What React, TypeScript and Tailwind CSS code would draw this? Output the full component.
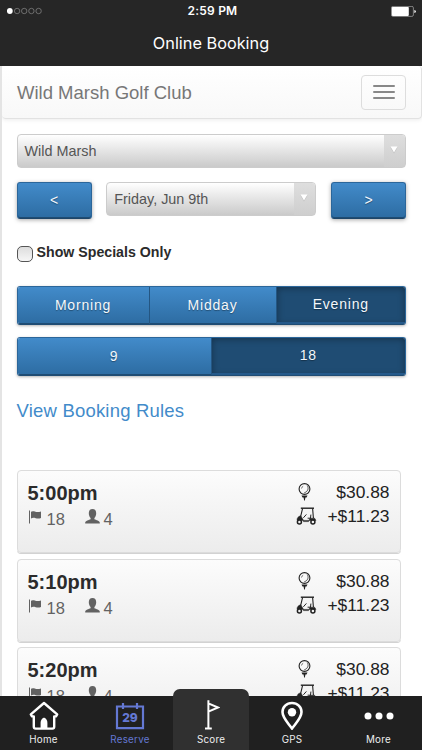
import type { ReactNode } from "react";

const helvetica = "font-['Liberation_Sans',Arial,sans-serif]";
const inter = "font-['Inter',sans-serif]";

function StatusBar() {
  return (
    <div className={`flex h-[22px] items-center justify-between pl-[7px] pr-[6px] text-white ${inter}`}>
      <span className="w-[70px]">
        <svg width="36" height="8" viewBox="0 0 36 8">
          <circle cx="2.8" cy="4" r="2.9" fill="#fff" />
          {[10.1, 17.2, 24.4, 31.6].map((x) => (
            <circle key={x} cx={x} cy="4" r="2.7" fill="none" stroke="#8a8a8a" strokeWidth="0.7" />
          ))}
        </svg>
      </span>
      <span className="pl-[2px] text-[12px] font-semibold tracking-[0.2px]">2:59 PM</span>
      <span className="flex w-[70px] justify-end">
        <svg width="25" height="11" viewBox="0 0 25 11">
          <rect x="0.4" y="0.4" width="22" height="10" rx="1.5" fill="none" stroke="#aaa" strokeWidth="0.7" />
          <rect x="0.8" y="0.9" width="17" height="9" rx="0.8" fill="#fff" />
          <path d="M23.4 4 Q24.9 4.3 24.9 5.5 T23.4 7Z" fill="#fff" />
        </svg>
      </span>
    </div>
  );
}

function Select({ label, className }: { label: string; className: string }) {
  return (
    <div
      className={`flex h-[34px] overflow-hidden rounded-[4px] border border-[#ccc] bg-gradient-to-b from-white to-[#cacaca] ${className}`}
    >
      <span className="flex-1 pl-[7px] text-[14.4px] leading-[33px] text-[#555]">{label}</span>
      <span className="flex w-[21px] justify-center bg-gradient-to-b from-[#dedede] to-[#cecece] pt-[11px]">
        <svg width="8" height="8" viewBox="0 0 8 8" className="-ml-[1px]">
          <path d="M0.5 1.5H7.5L4 7.5Z" fill="#999" opacity="0.4" />
          <path d="M0.5 0.5H7.5L4 6.5Z" fill="#fff" />
        </svg>
      </span>
    </div>
  );
}

const blueFace =
  "bg-gradient-to-b from-[#428bca] to-[#2d6ca2] text-[#f4f8fc] [text-shadow:0_1px_1px_rgba(0,0,0,0.35)] text-center text-[14px]";
const activeFace =
  "bg-[#1f4c73] text-[#f4f8fc] text-center text-[14px] [text-shadow:0_1px_1px_rgba(0,0,0,0.35)] shadow-[inset_0_-2px_0_#24598a,inset_0_1px_7px_rgba(0,0,0,0.35)]";

function ArrowButton({ children }: { children: ReactNode }) {
  return (
    <button
      className={`h-[37px] w-[75px] rounded-[3px] border border-[#2b669a] border-b-[#1d4568] shadow-[0_1px_4px_rgba(0,0,0,0.35),inset_0_-1px_0_#1f4c73] ${blueFace}`}
    >
      {children}
    </button>
  );
}

function Segments({ items }: { items: { label: string; width: string; active?: boolean }[] }) {
  return (
    <div className="flex h-[39px] overflow-hidden rounded-[3px] border border-[#2b669a] border-b-[#1f4c73] shadow-[0_1px_3px_rgba(0,0,0,0.3)]">
      {items.map((s, i) => (
        <div
          key={s.label}
          className={`tracking-[0.8px] ${s.width} ${
            s.active
              ? `${activeFace} leading-[35px]`
              : `${blueFace} leading-[37px] shadow-[inset_0_-1px_0_#1f4c73] ${i < items.length - 1 ? "border-r border-[#245682]" : ""}`
          }`}
        >
          {s.label}
        </div>
      ))}
    </div>
  );
}

function FlagIcon() {
  return (
    <svg width="14" height="14" viewBox="0 0 14 14" fill="#626262">
      <path d="M1 0.5H2V13.5H1Z" />
      <path d="M3 1.8C5.5 0 7.5 3.2 13 1.4V8C8.5 9.8 6.5 6.4 3 8.4Z" />
    </svg>
  );
}

function PersonIcon() {
  return (
    <svg width="15" height="15" viewBox="0 0 15 15" fill="#626262">
      <path d="M7.5 0C9.9 0 11.2 1.6 11.2 4.2C11.2 6.3 10.4 8 9.4 9V10.2C11 11 14.8 11.6 14.8 13.8V14.6H0.2V13.8C0.2 11.6 4 11 5.6 10.2V9C4.6 8 3.8 6.3 3.8 4.2C3.8 1.6 5.1 0 7.5 0Z" />
    </svg>
  );
}

function BallIcon() {
  return (
    <svg width="13" height="18" viewBox="0 0 13 18" fill="none" stroke="#222">
      <circle cx="6.5" cy="6" r="5.4" strokeWidth="1.1" />
      <path d="M9.2 2.5C11 5 10 8.6 6.3 9.8" strokeWidth="0.8" />
      <path d="M3.5 5.5Q3.8 3.8 5.2 3.2" strokeWidth="0.6" />
      <path d="M3.5 12.4H9.5L8.5 14.4H7.4L6.9 17.5H6.1L5.6 14.4H4.5Z" fill="#222" stroke="none" />
    </svg>
  );
}

function CartIcon() {
  return (
    <svg width="21" height="18" viewBox="0 0 21 18" fill="none" stroke="#222">
      <path d="M4.8 1.2H18" strokeWidth="1.4" />
      <path d="M6.6 1.4L4.6 9.6M16.6 1.4L17.4 11" strokeWidth="1.1" />
      <path d="M4.8 8.8L7.4 13.2V14.6H12.6L14 11.2H18.6L20 13.4H6L1 13.2C1 10.8 2.4 9.2 4.8 8.8Z" fill="#222" strokeWidth="0.5" />
      <path d="M7.4 10.8L10.4 7.4M11.6 11.2H14.5L14.9 7.6" strokeWidth="1" />
      <circle cx="3.4" cy="15.1" r="2" strokeWidth="1.5" fill="#f3f3f3" />
      <circle cx="16.9" cy="15.1" r="2" strokeWidth="1.5" fill="#f3f3f3" />
    </svg>
  );
}

function TeeTime({ time }: { time: string }) {
  return (
    <div className="flex h-[83px] w-[384px] shrink-0 justify-between rounded-[4px] border border-[#dcdcdc] bg-gradient-to-b from-[#fcfcfc] to-[#ececec] pl-[10px] pr-[10px] shadow-[0_1px_0_#d2d2d2]">
      <div className="pt-[10px]">
        <div className="text-[20px] font-bold leading-[24px] text-[#2b2b2b]">{time}</div>
        <div className="mt-[3px] flex h-[22px] text-[16.5px] leading-[23px] text-[#626262]">
          <span className="pt-[2px]"><FlagIcon /></span>
          <span className="ml-[5px] w-[38px]">18</span>
          <span className="pt-[1px]"><PersonIcon /></span>
          <span className="ml-[4px]">4</span>
        </div>
      </div>
      <div className="pt-[9px] text-[17.4px] leading-[24px] text-[#222]">
        <div className="flex items-start justify-between">
          <span className="pl-[2px] pt-[3px]"><BallIcon /></span>
          <span>$30.88</span>
        </div>
        <div className="flex items-start gap-[10px]">
          <span className="pt-[3px]"><CartIcon /></span>
          <span>+$11.23</span>
        </div>
      </div>
    </div>
  );
}

function Tab({ label, icon, className }: { label: string; icon: ReactNode; className: string }) {
  return (
    <div className={`flex flex-col items-center justify-end pb-[3.5px] ${className}`}>
      {icon}
      <span className="mt-[3px] text-[9.8px] leading-[14px] tracking-[0.25px]">{label}</span>
    </div>
  );
}

export default function App() {
  return (
    <div className={`flex h-[750px] w-[422px] flex-col overflow-hidden bg-white ${helvetica}`}>
      <header className="h-[66px] shrink-0 bg-[#262626]">
        <StatusBar />
        <h1 className={`text-center text-[16.3px] leading-[42px] text-white ${inter}`}>Online Booking</h1>
      </header>

      <main className="min-h-0 flex-1 overflow-hidden border-l-2 border-[#e4e4e4]">
        <nav className="flex h-[53px] items-center justify-between rounded-[4px] border-b border-r border-[#e2e2e2] bg-gradient-to-b from-white to-[#f8f8f8] pl-[15px] pr-[15px] shadow-[0_1px_4px_rgba(0,0,0,0.08)]">
          <span className="pt-[2px] text-[18.5px] text-[#777]">Wild Marsh Golf Club</span>
          <button className="flex h-[35px] w-[45px] flex-col items-center justify-center gap-[4px] rounded-[4px] border border-[#ddd]">
            <i className="h-[2px] w-[22px] rounded-[1px] bg-[#888]" />
            <i className="h-[2px] w-[22px] rounded-[1px] bg-[#888]" />
            <i className="h-[2px] w-[22px] rounded-[1px] bg-[#888]" />
          </button>
        </nav>

        <div className="flex flex-col pl-[14.5px] pr-[16px] pt-[15px]">
          <Select label="Wild Marsh" className="w-full" />
          <div className="mt-[14px] flex justify-between">
            <ArrowButton>&lt;</ArrowButton>
            <Select label="Friday, Jun 9th" className="w-[210px]" />
            <ArrowButton>&gt;</ArrowButton>
          </div>
          <label className="mt-[24px] flex h-[20px] items-center gap-[4px] text-[14.2px] font-bold text-[#2b2b2b]">
            <span className="mt-[2px] h-[16px] w-[16px] rounded-[5px] border border-[#555] bg-gradient-to-b from-[#ddd] to-[#f6f6f6]" />
            Show Specials Only
          </label>
          <div className="mt-[23px] flex flex-col gap-[12px]">
            <Segments
              items={[
                { label: "Morning", width: "w-[132px]" },
                { label: "Midday", width: "w-[127px]" },
                { label: "Evening", width: "flex-1", active: true },
              ]}
            />
            <Segments
              items={[
                { label: "9", width: "w-[194px]" },
                { label: "18", width: "flex-1", active: true },
              ]}
            />
          </div>
          <a className="mt-[23px] text-[18.5px] leading-[24px] tracking-[0.2px] text-[#428bca]">View Booking Rules</a>
          <div className="mt-[47px] flex flex-col gap-[5.5px]">
            <TeeTime time="5:00pm" />
            <TeeTime time="5:10pm" />
            <TeeTime time="5:20pm" />
          </div>
        </div>
      </main>

      <footer className={`relative flex h-[54px] shrink-0 bg-[#202020] text-[#eee] ${inter}`}>
        <Tab
          label="Home"
          className="w-[87px]"
          icon={
            <svg width="30" height="29" viewBox="0 0 30 29" fill="none" stroke="#fff" strokeWidth="2.4" strokeLinejoin="round">
              <path d="M15 2L1.8 13.4L3 15.4H4.8V25.8Q4.8 27.6 6.6 27.6H23.4Q25.2 27.6 25.2 25.8V15.4H27L28.2 13.4Z" />
              <path d="M11.6 27V22C11.6 19 13.6 16.8 15 16.8C16.4 16.8 18.4 19 18.4 22V27Z" fill="#fff" stroke="none" />
            </svg>
          }
        />
        <Tab
          label="Reserve"
          className="w-[86px] text-[#6478d3]"
          icon={
            <svg width="30" height="28" viewBox="0 0 30 28" fill="none" stroke="#6478d3" strokeWidth="2.2">
              <path d="M2 4.5H28V26.1H2ZM8 1.1V6.9M22 1.1V6.9" />
              <text x="15" y="19.7" textAnchor="middle" fontSize="12" fontWeight="800" fill="#6478d3" stroke="none">29</text>
            </svg>
          }
        />
        <Tab
          label="Score"
          className="-mt-[7px] w-[76px] rounded-t-[7px] bg-[#303030]"
          icon={
            <svg width="18" height="31" viewBox="0 0 18 31" fill="none" stroke="#fff" strokeWidth="2">
              <path d="M6.4 1.2V29.6M3 29.6H9.8M6.4 4.4L16 8.5L6.4 12.6" />
            </svg>
          }
        />
        <Tab
          label="GPS"
          className="w-[86px]"
          icon={
            <svg width="22" height="29" viewBox="0 0 22 29">
              <path d="M11 2C5.5 2 1.5 6.1 1.5 11.1C1.5 17 7 22 11 27.5C15 22 20.5 17 20.5 11.1C20.5 6.1 16.5 2 11 2Z" fill="none" stroke="#fff" strokeWidth="2.6" />
              <circle cx="11" cy="11.3" r="4.2" fill="#fff" />
            </svg>
          }
        />
        <Tab
          label="More"
          className="w-[87px]"
          icon={
            <svg width="30" height="28" viewBox="0 0 30 28" fill="#fff">
              <circle cx="4" cy="14" r="3.5" />
              <circle cx="15" cy="14" r="3.5" />
              <circle cx="26" cy="14" r="3.5" />
            </svg>
          }
        />
      </footer>
    </div>
  );
}
